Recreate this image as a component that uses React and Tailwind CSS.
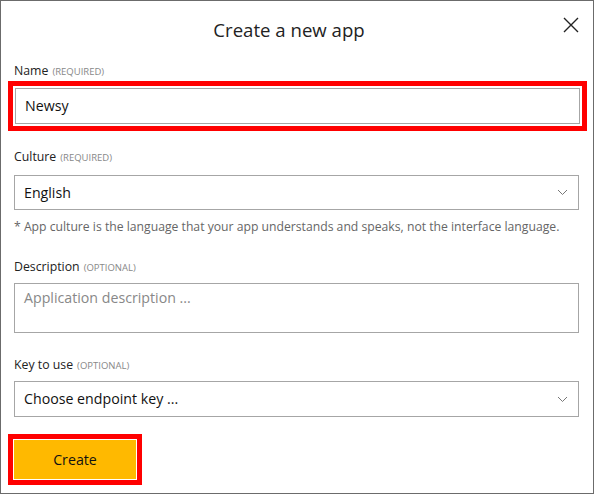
import React from 'react';

const font = { fontFamily: '"Open Sans", "Liberation Sans", sans-serif' };

const Label = ({ text, hint, className = '' }) => (
    <div className={`flex items-center gap-[4px] h-[16px] text-[12.3px] leading-[16px] text-[#222] ${className}`}>
        <span>{text}</span>
        <span className="text-[9.5px] leading-[16px] pt-[1px] text-[#888] uppercase">({hint})</span>
    </div>
);

const Chevron = () => (
    <svg width="11" height="7" viewBox="0 0 11 7" fill="none" className="shrink-0">
        <path d="M1 1l4.5 4.5L10 1" stroke="#777" strokeWidth="1" />
    </svg>
);

const Select = ({ value, className = '' }) => (
    <div className={`flex items-center justify-between w-[565px] border border-[#a6a6a6] pl-[9px] pr-[10px] ${className}`}>
        <span className="text-[14.2px] text-[#111]">{value}</span>
        <Chevron />
    </div>
);

export default function App() {
    return (
        <div style={font} className="w-[594px] h-[494px] border border-[#6b6b6b] bg-white relative">
            <div className="h-[62px] pt-[16px] pr-[16px] flex justify-center relative">
                <h1 className="text-[18.6px] leading-[26px] text-[#222] font-normal">Create a new app</h1>
                <button className="absolute right-[14px] top-[16px] w-[16px] h-[16px] flex items-center justify-center">
                    <svg width="16" height="16" viewBox="0 0 16 16">
                        <path d="M1 1L15 15M15 1L1 15" stroke="#222" strokeWidth="1.4" />
                    </svg>
                </button>
            </div>

            <div className="pl-[13px] flex flex-col">
                <Label text="Name" hint="Required" />
                <div className="mt-[2px] -ml-[6px] w-[579px] border-[5px] border-[#ff0000] p-[2px]">
                    <div className="h-[36px] border border-[#a6a6a6] flex items-center pl-[9px] text-[14.2px] text-[#111]">
                        Newsy
                    </div>
                </div>

                <Label text="Culture" hint="Required" className="mt-[18px]" />
                <Select value="English" className="mt-[10px] h-[35px]" />
                <p className="mt-[8px] h-[18px] text-[12.2px] leading-[18px] text-[#666]">
                    * App culture is the language that your app understands and speaks, not the interface language.
                </p>

                <Label text="Description" hint="Optional" className="mt-[23px]" />
                <div className="mt-[8px] h-[50px] w-[565px] border border-[#a6a6a6] pl-[9px] pt-[4px] text-[14.2px] leading-[20px] text-[#888]">
                    Application description ...
                </div>

                <Label text="Key to use" hint="Optional" className="mt-[24px]" />
                <Select value="Choose endpoint key ..." className="mt-[8px] h-[36px]" />

                <div className="mt-[17px] -ml-[6px] w-[134px] border-[5px] border-[#ff0000] p-[1px]">
                    <button className="w-full h-[39px] bg-[#ffb900] text-[14.2px] text-[#111]">Create</button>
                </div>
            </div>
        </div>
    );
}
